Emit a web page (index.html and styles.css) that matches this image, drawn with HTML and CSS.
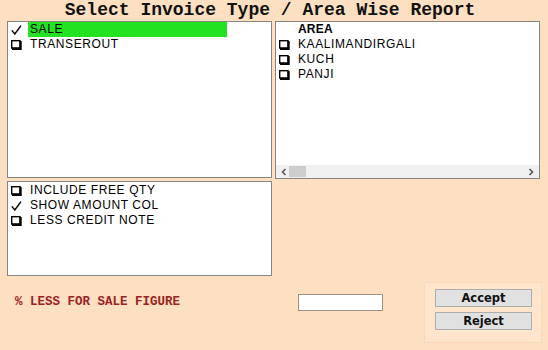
FILE: index.html
```html
<!DOCTYPE html>
<html lang="en">
<head>
  <meta charset="UTF-8">
  <title>Select Invoice Type / Area Wise Report</title>
  <link rel="stylesheet" href="styles.css">
</head>
<body>

  <h1 class="title">Select Invoice Type / Area Wise Report</h1>

  <div class="boxes">
    <div class="box type-box">
      <div class="row">
        <svg class="ico" width="11" height="10" viewBox="0 0 11 10"><path d="M0.8 5.4 L3.8 9 L10 0.6" fill="none" stroke="#000" stroke-width="1.4"/></svg>
        <span class="label selected">SALE</span>
      </div>
      <div class="row">
        <svg class="ico" width="11" height="10" viewBox="0 0 11 10"><rect x="0.7" y="0.7" width="8.3" height="7.3" fill="#fff" stroke="#000" stroke-width="1.4"/><path d="M8.5 1h2.2v9H1V7.8h7.5z" fill="#000"/></svg>
        <span class="label">TRANSEROUT</span>
      </div>
    </div>

    <div class="box area-box">
      <div class="area-list">
        <div class="row">
          <span class="ico"></span>
          <span class="label head">AREA</span>
        </div>
        <div class="row">
          <svg class="ico" width="11" height="10" viewBox="0 0 11 10"><rect x="0.7" y="0.7" width="8.3" height="7.3" fill="#fff" stroke="#000" stroke-width="1.4"/><path d="M8.5 1h2.2v9H1V7.8h7.5z" fill="#000"/></svg>
          <span class="label">KAALIMANDIRGALI</span>
        </div>
        <div class="row">
          <svg class="ico" width="11" height="10" viewBox="0 0 11 10"><rect x="0.7" y="0.7" width="8.3" height="7.3" fill="#fff" stroke="#000" stroke-width="1.4"/><path d="M8.5 1h2.2v9H1V7.8h7.5z" fill="#000"/></svg>
          <span class="label">KUCH</span>
        </div>
        <div class="row">
          <svg class="ico" width="11" height="10" viewBox="0 0 11 10"><rect x="0.7" y="0.7" width="8.3" height="7.3" fill="#fff" stroke="#000" stroke-width="1.4"/><path d="M8.5 1h2.2v9H1V7.8h7.5z" fill="#000"/></svg>
          <span class="label">PANJI</span>
        </div>
      </div>
      <div class="hscroll">
        <svg class="arrow" width="8" height="8" viewBox="0 0 8 8"><path d="M5.5 1 L2.5 4 L5.5 7" fill="none" stroke="#555" stroke-width="1.5"/></svg>
        <span class="thumb"></span>
        <span class="track"></span>
        <svg class="arrow" width="8" height="8" viewBox="0 0 8 8"><path d="M2.5 1 L5.5 4 L2.5 7" fill="none" stroke="#555" stroke-width="1.5"/></svg>
      </div>
    </div>

    <div class="box option-box">
      <div class="row">
        <svg class="ico" width="11" height="10" viewBox="0 0 11 10"><rect x="0.7" y="0.7" width="8.3" height="7.3" fill="#fff" stroke="#000" stroke-width="1.4"/><path d="M8.5 1h2.2v9H1V7.8h7.5z" fill="#000"/></svg>
        <span class="label">INCLUDE FREE QTY</span>
      </div>
      <div class="row">
        <svg class="ico" width="11" height="10" viewBox="0 0 11 10"><path d="M0.8 5.4 L3.8 9 L10 0.6" fill="none" stroke="#000" stroke-width="1.4"/></svg>
        <span class="label">SHOW AMOUNT COL</span>
      </div>
      <div class="row">
        <svg class="ico" width="11" height="10" viewBox="0 0 11 10"><rect x="0.7" y="0.7" width="8.3" height="7.3" fill="#fff" stroke="#000" stroke-width="1.4"/><path d="M8.5 1h2.2v9H1V7.8h7.5z" fill="#000"/></svg>
        <span class="label">LESS CREDIT NOTE</span>
      </div>
    </div>
  </div>

  <div class="bottom">
    <label class="less-label" for="lessPct">% LESS FOR SALE FIGURE</label>
    <input class="less-input" id="lessPct" type="text">
    <div class="btn-panel">
      <button class="btn">Accept</button>
      <button class="btn">Reject</button>
    </div>
  </div>

</body>
</html>
```

FILE: styles.css
```css
body {
  margin: 0;
  background: #fde0c1;
  font-family: 'Liberation Sans', Arial, sans-serif;
  color: #000;
  width: 548px;
  height: 350px;
  overflow: hidden;
}

.title {
  margin: 0;
  height: 21px;
  line-height: 20px;
  font-family: 'Liberation Mono', 'Courier New', monospace;
  font-size: 18px;
  font-weight: bold;
  text-align: center;
  padding-right: 8px;
  color: #111;
}

.boxes {
  display: grid;
  grid-template-columns: 265px 265px;
  grid-template-rows: 157px 95px;
  column-gap: 3px;
  row-gap: 3px;
  margin-left: 7px;
}

.box {
  background: #fff;
  border: 1px solid #858585;
  box-sizing: border-box;
}

.type-box {
  grid-column: 1;
  grid-row: 1;
}

.area-box {
  grid-column: 2;
  grid-row: 1;
  height: 158px;
  display: flex;
  flex-direction: column;
}

.area-list {
  flex: 1;
}

.option-box {
  grid-column: 1;
  grid-row: 2;
  padding-top: 1px;
}

.row {
  display: flex;
  align-items: center;
  height: 15px;
  padding-left: 3px;
  font-size: 12px;
  letter-spacing: 0.6px;
  white-space: nowrap;
}

.ico {
  width: 11px;
  height: 10px;
  flex: none;
  margin-right: 6px;
}

.label {
  padding: 0 2px;
  line-height: 15px;
}

.label.selected {
  background: #22e222;
  width: 195px;
}

.label.head {
  font-weight: bold;
  letter-spacing: 0.2px;
}

.hscroll {
  display: flex;
  align-items: center;
  height: 13px;
  background: #f0f0f0;
  padding: 0 4px;
}

.arrow {
  flex: none;
}

.thumb {
  width: 17px;
  height: 11px;
  background: #cdcdcd;
  margin-left: 1px;
}

.track {
  flex: 1;
}

.bottom {
  display: flex;
  align-items: flex-start;
  margin-top: 6px;
  padding-left: 15px;
}

.less-label {
  width: 283px;
  margin-top: 13px;
  line-height: 14px;
  font-family: 'Liberation Mono', 'Courier New', monospace;
  font-size: 12.5px;
  font-weight: bold;
  color: #9a2222;
  white-space: nowrap;
}

.less-input {
  width: 85px;
  height: 17px;
  box-sizing: border-box;
  margin: 12px 0 0 0;
  border: 1px solid #9c9080;
  background: #fff;
  padding: 0 2px;
}

.btn-panel {
  display: flex;
  flex-direction: column;
  gap: 5px;
  width: 118px;
  height: 61px;
  box-sizing: border-box;
  margin-left: 41px;
  padding: 6px 0 0 10px;
  background: #fee5cc;
  border: 1px solid #f8d9ba;
}

.btn {
  width: 97px;
  height: 18px;
  padding: 0;
  background: #e1e1e1;
  border: 1px solid #adadad;
  font-family: 'DejaVu Sans', Verdana, sans-serif;
  font-size: 11.5px;
  font-weight: bold;
  color: #111;
}
```
